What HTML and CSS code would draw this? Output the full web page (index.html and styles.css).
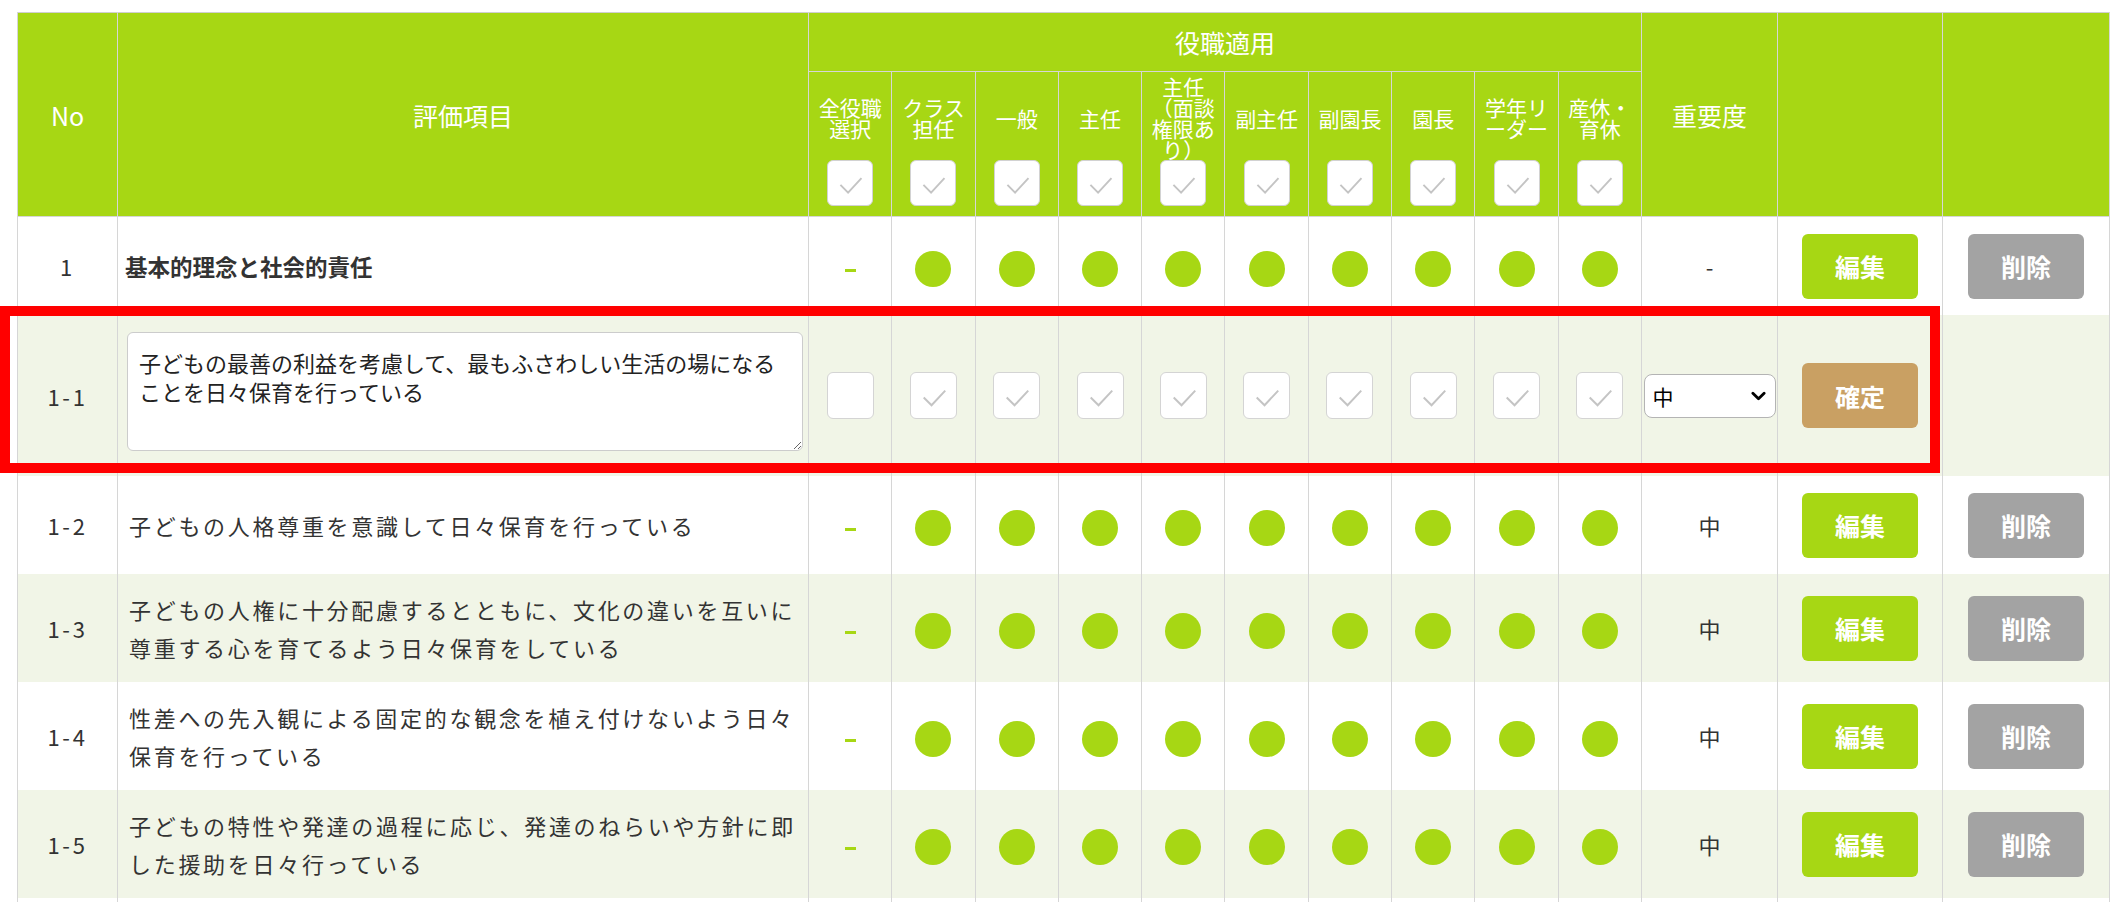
FILE: index.html
```html
<!DOCTYPE html>
<html lang="ja">
<head>
<meta charset="utf-8">
<title>評価項目</title>
<link rel="stylesheet" href="styles.css">
</head>
<body>
<div class="page">
  <table class="grid">
    <colgroup>
      <col class="c-no"><col class="c-item">
      <col class="c-role"><col class="c-role"><col class="c-role"><col class="c-role"><col class="c-role">
      <col class="c-role"><col class="c-role"><col class="c-role"><col class="c-role"><col class="c-role">
      <col class="c-imp"><col class="c-edit"><col class="c-del">
    </colgroup>
    <thead>
      <tr class="h1">
        <th rowspan="2" class="th-main">No</th>
        <th rowspan="2" class="th-main">評価項目</th>
        <th colspan="10" class="th-main th-group">役職適用</th>
        <th rowspan="2" class="th-main">重要度</th>
        <th rowspan="2" class="th-main"></th>
        <th rowspan="2" class="th-main"></th>
      </tr>
      <tr class="h2">
        <th class="th-role"><div class="role-head"><div class="role-label">全役職<br>選択</div><span class="cb"><svg viewBox="0 0 46 46"><polyline points="13,25 21,33 35,18"/></svg></span></div></th>
        <th class="th-role"><div class="role-head"><div class="role-label">クラス<br>担任</div><span class="cb"><svg viewBox="0 0 46 46"><polyline points="13,25 21,33 35,18"/></svg></span></div></th>
        <th class="th-role"><div class="role-head"><div class="role-label">一般</div><span class="cb"><svg viewBox="0 0 46 46"><polyline points="13,25 21,33 35,18"/></svg></span></div></th>
        <th class="th-role"><div class="role-head"><div class="role-label">主任</div><span class="cb"><svg viewBox="0 0 46 46"><polyline points="13,25 21,33 35,18"/></svg></span></div></th>
        <th class="th-role"><div class="role-head"><div class="role-label">主任<br>（面談<br>権限あ<br>り）</div><span class="cb"><svg viewBox="0 0 46 46"><polyline points="13,25 21,33 35,18"/></svg></span></div></th>
        <th class="th-role"><div class="role-head"><div class="role-label">副主任</div><span class="cb"><svg viewBox="0 0 46 46"><polyline points="13,25 21,33 35,18"/></svg></span></div></th>
        <th class="th-role"><div class="role-head"><div class="role-label">副園長</div><span class="cb"><svg viewBox="0 0 46 46"><polyline points="13,25 21,33 35,18"/></svg></span></div></th>
        <th class="th-role"><div class="role-head"><div class="role-label">園長</div><span class="cb"><svg viewBox="0 0 46 46"><polyline points="13,25 21,33 35,18"/></svg></span></div></th>
        <th class="th-role"><div class="role-head"><div class="role-label">学年リ<br>ーダー</div><span class="cb"><svg viewBox="0 0 46 46"><polyline points="13,25 21,33 35,18"/></svg></span></div></th>
        <th class="th-role"><div class="role-head"><div class="role-label">産休・<br>育休</div><span class="cb"><svg viewBox="0 0 46 46"><polyline points="13,25 21,33 35,18"/></svg></span></div></th>
      </tr>
    </thead>
    <tbody>
      <tr class="r-single">
        <td class="no">1</td>
        <td class="item item-bold">基本的理念と社会的責任</td>
        <td class="mid"><span class="dash"></span></td>
        <td class="mid"><span class="dot"></span></td>
        <td class="mid"><span class="dot"></span></td>
        <td class="mid"><span class="dot"></span></td>
        <td class="mid"><span class="dot"></span></td>
        <td class="mid"><span class="dot"></span></td>
        <td class="mid"><span class="dot"></span></td>
        <td class="mid"><span class="dot"></span></td>
        <td class="mid"><span class="dot"></span></td>
        <td class="mid"><span class="dot"></span></td>
        <td class="mid imp">-</td>
        <td class="mid"><button class="btn btn-edit">編集</button></td>
        <td class="mid"><button class="btn btn-del">削除</button></td>
      </tr>
      <tr class="r-edit alt">
        <td class="no">1-1</td>
        <td class="item-edit"><textarea class="ta">子どもの最善の利益を考慮して、最もふさわしい生活の場になることを日々保育を行っている</textarea></td>
        <td class="mid"><span class="cb cb-row"></span></td>
        <td class="mid"><span class="cb cb-row"><svg viewBox="0 0 46 46"><polyline points="13,25 21,33 35,18"/></svg></span></td>
        <td class="mid"><span class="cb cb-row"><svg viewBox="0 0 46 46"><polyline points="13,25 21,33 35,18"/></svg></span></td>
        <td class="mid"><span class="cb cb-row"><svg viewBox="0 0 46 46"><polyline points="13,25 21,33 35,18"/></svg></span></td>
        <td class="mid"><span class="cb cb-row"><svg viewBox="0 0 46 46"><polyline points="13,25 21,33 35,18"/></svg></span></td>
        <td class="mid"><span class="cb cb-row"><svg viewBox="0 0 46 46"><polyline points="13,25 21,33 35,18"/></svg></span></td>
        <td class="mid"><span class="cb cb-row"><svg viewBox="0 0 46 46"><polyline points="13,25 21,33 35,18"/></svg></span></td>
        <td class="mid"><span class="cb cb-row"><svg viewBox="0 0 46 46"><polyline points="13,25 21,33 35,18"/></svg></span></td>
        <td class="mid"><span class="cb cb-row"><svg viewBox="0 0 46 46"><polyline points="13,25 21,33 35,18"/></svg></span></td>
        <td class="mid"><span class="cb cb-row"><svg viewBox="0 0 46 46"><polyline points="13,25 21,33 35,18"/></svg></span></td>
        <td class="mid sel-cell"><span class="sel-wrap"><select class="sel"><option>中</option><option>高</option><option>低</option></select><svg class="chev" viewBox="0 0 16 10"><polyline points="2,2 8,8 14,2"/></svg></span></td>
        <td class="mid"><button class="btn btn-ok">確定</button></td>
        <td class="mid"></td>
      </tr>
      <tr class="r-single">
        <td class="no">1-2</td>
        <td class="item">子どもの人格尊重を意識して日々保育を行っている</td>
        <td class="mid"><span class="dash"></span></td>
        <td class="mid"><span class="dot"></span></td>
        <td class="mid"><span class="dot"></span></td>
        <td class="mid"><span class="dot"></span></td>
        <td class="mid"><span class="dot"></span></td>
        <td class="mid"><span class="dot"></span></td>
        <td class="mid"><span class="dot"></span></td>
        <td class="mid"><span class="dot"></span></td>
        <td class="mid"><span class="dot"></span></td>
        <td class="mid"><span class="dot"></span></td>
        <td class="mid imp">中</td>
        <td class="mid"><button class="btn btn-edit">編集</button></td>
        <td class="mid"><button class="btn btn-del">削除</button></td>
      </tr>
      <tr class="alt">
        <td class="no">1-3</td>
        <td class="item">子どもの人権に十分配慮するとともに、文化の違いを互いに尊重する心を育てるよう日々保育をしている</td>
        <td class="mid"><span class="dash"></span></td>
        <td class="mid"><span class="dot"></span></td>
        <td class="mid"><span class="dot"></span></td>
        <td class="mid"><span class="dot"></span></td>
        <td class="mid"><span class="dot"></span></td>
        <td class="mid"><span class="dot"></span></td>
        <td class="mid"><span class="dot"></span></td>
        <td class="mid"><span class="dot"></span></td>
        <td class="mid"><span class="dot"></span></td>
        <td class="mid"><span class="dot"></span></td>
        <td class="mid imp">中</td>
        <td class="mid"><button class="btn btn-edit">編集</button></td>
        <td class="mid"><button class="btn btn-del">削除</button></td>
      </tr>
      <tr>
        <td class="no">1-4</td>
        <td class="item">性差への先入観による固定的な観念を植え付けないよう日々保育を行っている</td>
        <td class="mid"><span class="dash"></span></td>
        <td class="mid"><span class="dot"></span></td>
        <td class="mid"><span class="dot"></span></td>
        <td class="mid"><span class="dot"></span></td>
        <td class="mid"><span class="dot"></span></td>
        <td class="mid"><span class="dot"></span></td>
        <td class="mid"><span class="dot"></span></td>
        <td class="mid"><span class="dot"></span></td>
        <td class="mid"><span class="dot"></span></td>
        <td class="mid"><span class="dot"></span></td>
        <td class="mid imp">中</td>
        <td class="mid"><button class="btn btn-edit">編集</button></td>
        <td class="mid"><button class="btn btn-del">削除</button></td>
      </tr>
      <tr class="alt">
        <td class="no">1-5</td>
        <td class="item">子どもの特性や発達の過程に応じ、発達のねらいや方針に即した援助を日々行っている</td>
        <td class="mid"><span class="dash"></span></td>
        <td class="mid"><span class="dot"></span></td>
        <td class="mid"><span class="dot"></span></td>
        <td class="mid"><span class="dot"></span></td>
        <td class="mid"><span class="dot"></span></td>
        <td class="mid"><span class="dot"></span></td>
        <td class="mid"><span class="dot"></span></td>
        <td class="mid"><span class="dot"></span></td>
        <td class="mid"><span class="dot"></span></td>
        <td class="mid"><span class="dot"></span></td>
        <td class="mid imp">中</td>
        <td class="mid"><button class="btn btn-edit">編集</button></td>
        <td class="mid"><button class="btn btn-del">削除</button></td>
      </tr>
      <tr class="r-tail">
        <td class="no"></td><td class="item"></td>
        <td class="mid"></td><td class="mid"></td><td class="mid"></td><td class="mid"></td><td class="mid"></td>
        <td class="mid"></td><td class="mid"></td><td class="mid"></td><td class="mid"></td><td class="mid"></td>
        <td class="mid"></td><td class="mid"></td><td class="mid"></td>
      </tr>
    </tbody>
  </table>
  <div class="highlight"></div>
</div>
</body>
</html>
```

FILE: styles.css
```css
html, body {
  margin: 0;
  padding: 0;
  background: #ffffff;
  overflow: hidden;
}

body {
  font-family: "Noto Sans CJK JP", "Noto Sans", sans-serif;
  color: #333333;
}

.page {
  position: relative;
  box-sizing: border-box;
  padding: 12px 0 0 17px;
  width: 2113px;
  height: 902px;
  overflow: hidden;
}

.grid {
  width: 2092px;
  border-collapse: collapse;
  table-layout: fixed;
  border-top: 1px solid #cfcfcf;
}

.c-no { width: 100px; }
.c-item { width: 691px; }
.c-role { width: 83.3px; }
.c-imp { width: 136px; }
.c-edit { width: 165px; }
.c-del { width: 167px; }

/* header */
.grid th {
  background: #a7d714;
  color: #ffffff;
  font-weight: normal;
  border: 1px solid #d6d6d6;
  border-top: none;
  padding: 0;
  text-align: center;
}

.th-main {
  font-size: 25px;
  line-height: 30px;
}

.h1 .th-group {
  height: 58px;
}

.h2 .th-role {
  height: 144px;
  vertical-align: top;
}

.role-head {
  display: flex;
  flex-direction: column;
  align-items: center;
  padding-top: 4px;
}

.role-label {
  height: 84px;
  display: flex;
  align-items: center;
  justify-content: center;
  font-size: 21px;
  line-height: 21px;
}

.cb {
  display: inline-block;
  width: 46px;
  height: 46px;
  box-sizing: border-box;
  background: #ffffff;
  border: 1px solid #d2d2d2;
  border-radius: 6px;
  vertical-align: middle;
}

.cb svg {
  display: block;
  width: 100%;
  height: 100%;
}

.cb polyline {
  fill: none;
  stroke: #c4c4c4;
  stroke-width: 2;
}

.cb-row {
  width: 47px;
  height: 47px;
  border-color: #d4d4d4;
}

/* body */
.grid td {
  border-left: 1px solid #d6d6d6;
  border-right: 1px solid #d6d6d6;
  padding: 16px 0;
  font-size: 22px;
  line-height: 38px;
  letter-spacing: 2.7px;
  vertical-align: middle;
}

.grid tbody tr {
  background: #ffffff;
}

.grid tbody tr.alt {
  background: #f1f5e7;
}

.r-single td {
  height: 66px;
}

.r-tail td {
  height: 40px;
}

.r-edit td {
  height: 129px;
}

.no {
  text-align: center;
}

.item {
  padding-left: 11px !important;
  padding-right: 5px !important;
}

.item-bold {
  padding-left: 7px !important;
  font-weight: bold;
  font-size: 22.5px !important;
  letter-spacing: 0 !important;
}

.item-edit {
  padding: 17px 0 0 9px !important;
  vertical-align: top !important;
}

.ta {
  display: block;
  width: 676px;
  height: 119px;
  box-sizing: border-box;
  border: 1px solid #cccccc;
  border-radius: 6px;
  padding: 15px 11px;
  font-family: "Noto Sans CJK JP", "Noto Sans", sans-serif;
  font-size: 22px;
  line-height: 29px;
  color: #222222;
  background: #ffffff;
  outline: none;
}

.mid {
  text-align: center;
}

.imp {
  letter-spacing: 0 !important;
}

.dot {
  display: inline-block;
  width: 36px;
  height: 36px;
  border-radius: 50%;
  background: #a7d714;
  vertical-align: middle;
}

.dash {
  display: inline-block;
  width: 11px;
  height: 3px;
  background: #a7d714;
  vertical-align: middle;
}

.btn {
  display: inline-flex;
  align-items: center;
  justify-content: center;
  width: 116px;
  height: 65px;
  border: none;
  border-radius: 6px;
  padding: 0;
  color: #ffffff;
  font-family: "Noto Sans CJK JP", "Noto Sans", sans-serif;
  font-weight: bold;
  font-size: 25px;
  letter-spacing: 0;
  vertical-align: middle;
}

.btn-edit { background: #a7d714; }
.btn-del { background: #a3a3a3; }
.btn-ok { background: #c9a063; }

.sel-cell {
  padding: 0 1px !important;
}

.sel-wrap {
  position: relative;
  display: inline-block;
  vertical-align: middle;
}

.sel {
  appearance: none;
  -webkit-appearance: none;
  display: block;
  width: 132px;
  height: 44px;
  box-sizing: border-box;
  border: 1px solid #b4b4b4;
  border-radius: 8px;
  background: #ffffff;
  padding: 0 0 0 8px;
  font-family: "Noto Sans CJK JP", "Noto Sans", sans-serif;
  font-size: 21px;
  color: #000000;
  outline: none;
}

.chev {
  position: absolute;
  right: 10px;
  top: 17px;
  width: 15px;
  height: 10px;
  pointer-events: none;
}

.chev polyline {
  fill: none;
  stroke: #000000;
  stroke-width: 3;
  stroke-linecap: round;
  stroke-linejoin: round;
}

.highlight {
  position: absolute;
  left: 0;
  top: 306px;
  width: 1940px;
  height: 167px;
  box-sizing: border-box;
  border: 10px solid #ff0000;
  pointer-events: none;
}
```
